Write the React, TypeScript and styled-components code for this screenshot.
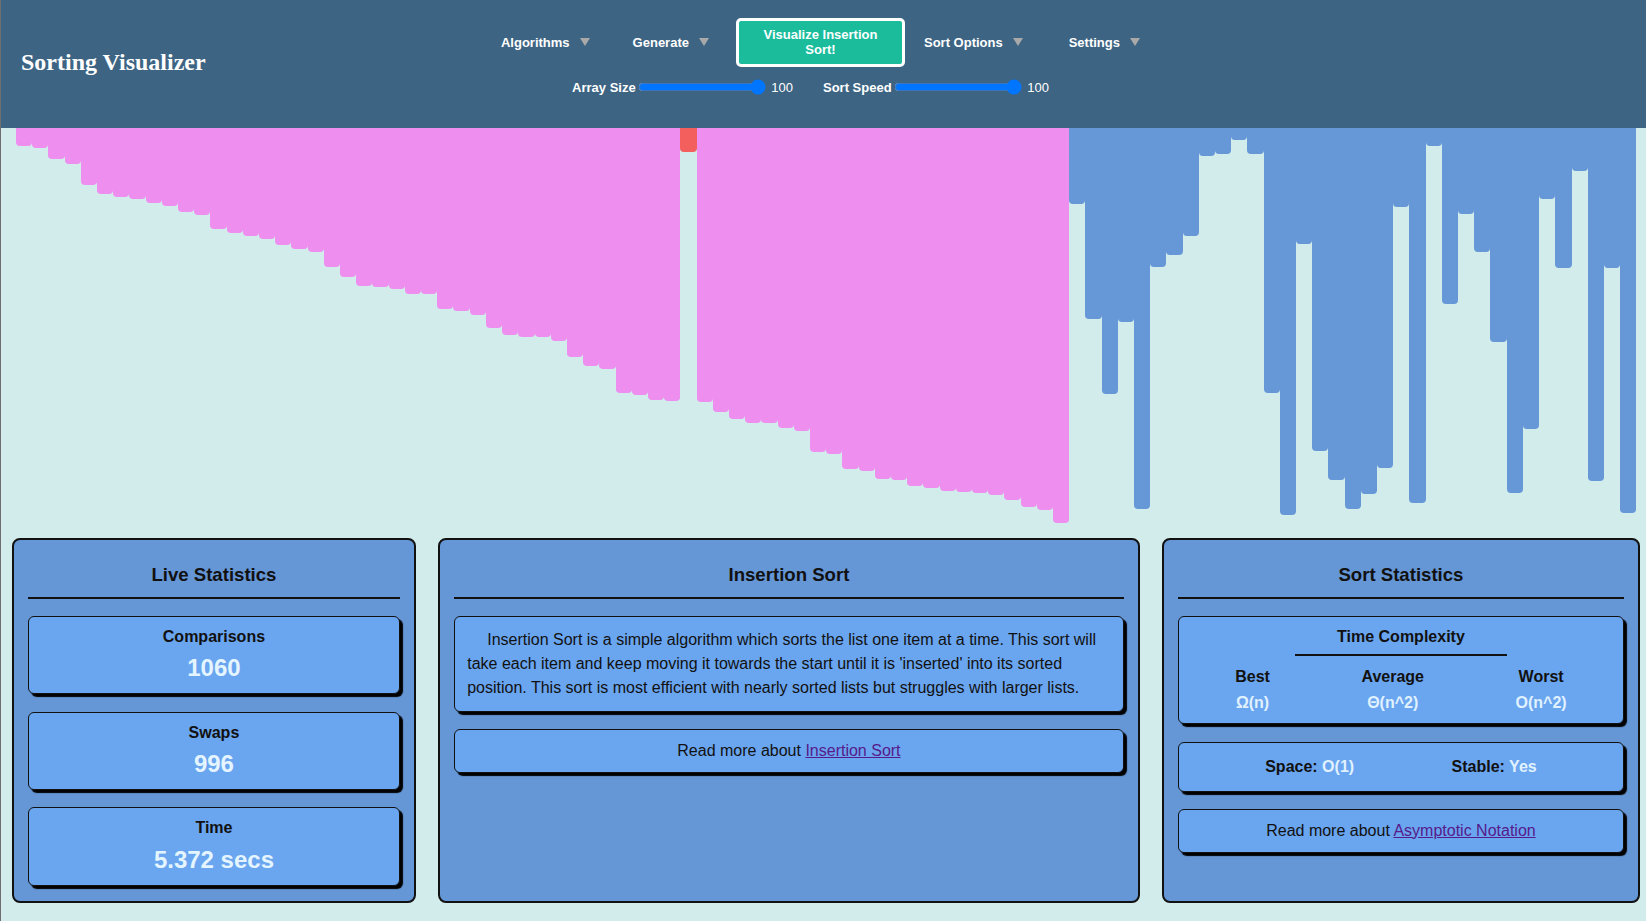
import React from 'react';
import styled, { createGlobalStyle } from 'styled-components';

const GlobalStyle = createGlobalStyle`
  html, body { margin: 0; padding: 0; }
  body {
    background: #d2eceb;
    font-family: "Liberation Sans", Arial, sans-serif;
  }
  * { box-sizing: border-box; }
`;

const Page = styled.div`
  min-height: 921px;
  border-left: 1px solid #6f6f6f;
  background: #d2eceb;
`;

const Header = styled.header`
  height: 128px;
  background: #3d6483;
  display: grid;
  grid-template-columns: 1fr auto 1fr;
  align-items: start;
`;

const Title = styled.h1`
  margin: 0;
  padding: 47px 0 0 20px;
  font: bold 24px/30px "Liberation Serif", "Times New Roman", serif;
  color: #ffffff;
  white-space: nowrap;
`;

const Controls = styled.div`
  display: flex;
  flex-direction: column;
  align-items: center;
  padding-top: 17.5px;
`;

const NavRow = styled.nav`
  display: flex;
  align-items: center;
  height: 49px;
  padding-right: 6px;
`;

const Dropdown = styled.div<{ $gap: number }>`
  display: flex;
  align-items: center;
  gap: 10px;
  margin-left: ${(p) => p.$gap}px;
  color: #ffffff;
  font-weight: bold;
  font-size: 13px;
  white-space: nowrap;
  cursor: pointer;
`;

const Caret = styled.span`
  width: 0;
  height: 0;
  border-left: 5px solid transparent;
  border-right: 5px solid transparent;
  border-top: 8px solid #a9a9a9;
`;

const VisualizeButton = styled.button`
  margin-left: 27px;
  width: 169px;
  height: 49px;
  border: 3px solid #ffffff;
  border-radius: 5px;
  background: #1abc9c;
  color: #ffffff;
  font: bold 13px/15px "Liberation Sans", Arial, sans-serif;
  padding: 0 18px;
  cursor: pointer;
`;

const SliderRow = styled.div`
  display: flex;
  align-items: center;
  margin-top: 10.5px;
  padding-right: 26px;
  color: #ffffff;
  font-size: 13px;
`;

const SliderLabel = styled.label<{ $gap: number }>`
  font-weight: bold;
  margin-left: ${(p) => p.$gap}px;
  white-space: nowrap;
`;

const Range = styled.input`
  margin: 2px;
  width: 128px;
`;

const SliderValue = styled.span`
  margin-left: 3.6px;
`;

const BarArea = styled.div`
  height: 400px;
  padding-left: 15px;
  display: flex;
  align-items: flex-start;
`;

const BarTrack = styled.div`
  width: 1620px;
  display: flex;
  align-items: flex-start;
`;

const barColors = {
  sorted: '#ee8eee',
  active: '#f25f5c',
  unsorted: '#6697d7',
};

const Bar = styled.div<{ $state: 'sorted' | 'active' | 'unsorted' }>`
  flex: 1 1 0;
  border-radius: 0 0 4px 4px;
  background: ${(p) => barColors[p.$state]};
`;

const Panels = styled.section`
  display: grid;
  grid-template-columns: 404.5px 702.5px 478.5px;
  column-gap: 21.5px;
  padding: 10.3px 0 0 10.7px;
`;

const Panel = styled.div`
  height: 364.7px;
  border: 2px solid #111111;
  border-radius: 8px;
  background: #6596d6;
  padding: 24.7px 14.5px 0;
  display: flex;
  flex-direction: column;
`;

const PanelTitle = styled.h2`
  margin: 0;
  font-size: 18.6px;
  line-height: 20px;
  font-weight: bold;
  text-align: center;
  color: #111111;
`;

const Rule = styled.div`
  height: 2px;
  background: #111111;
  margin: 11.7px 0 17px;
`;

const Card = styled.div`
  border: 1px solid #111111;
  border-radius: 6px;
  background: #6aa5ef;
  box-shadow: 3px 3px 1px #000000;
  color: #111111;
  & + & {
    margin-top: 17.5px;
  }
`;

const StatCard = styled(Card)`
  padding: 11px 12px 11px;
  text-align: center;
`;

const StatLabel = styled.div`
  font-size: 16px;
  font-weight: bold;
  line-height: 18.4px;
`;

const StatValue = styled.div`
  margin-top: 8.4px;
  font-size: 24px;
  font-weight: bold;
  line-height: 27.6px;
  color: #e4f5ff;
`;

const DescriptionCard = styled(Card)`
  padding: 11px 12px;
  font-size: 16px;
  line-height: 24px;
  text-indent: 20px;
`;

const LinkCard = styled(Card)`
  padding: 11.5px 12px;
  font-size: 16px;
  line-height: 18.4px;
  text-align: center;
`;

const Link = styled.a`
  color: #551a8b;
  text-decoration: underline;
`;

const ComplexityCard = styled(Card)`
  padding: 11px 56px 11.4px;
  text-align: center;
  font-size: 16px;
  font-weight: bold;
  line-height: 18.4px;
`;

const SubRule = styled.div`
  width: 212px;
  height: 2px;
  background: #111111;
  margin: 8px auto 11.8px;
`;

const ComplexityRow = styled.div`
  display: flex;
  justify-content: space-between;
`;

const Column = styled.div`
  display: flex;
  flex-direction: column;
  align-items: center;
  gap: 7.3px;
`;

const LightValue = styled.span`
  color: #e0f2ff;
`;

const PropertyCard = styled(Card)`
  padding: 14.8px 86px;
  display: flex;
  justify-content: space-between;
  font-size: 16px;
  font-weight: bold;
  line-height: 18.4px;
`;

const values = [
  18, 20, 31, 36, 57, 66, 69, 71, 75, 78, 84, 87, 101, 105, 108, 111, 117, 121, 124, 139,
  149, 158, 159, 161, 166, 166, 181, 183, 187, 200, 207, 209, 209, 212.5, 228.5, 238, 241, 265, 267, 272,
  273, 24, 274, 284, 291, 295, 295, 300, 303, 324, 326, 341, 343, 351, 352, 358, 360, 363, 364, 365,
  367, 372, 379, 382, 395, 76, 191, 266, 194, 381, 139, 127, 108, 28, 26, 12, 26, 265, 387, 116,
  323, 352, 381, 366, 340, 79, 375, 18, 176, 86, 124, 214, 365, 301, 71, 140, 43, 353, 140, 385,
];

const SORTED_UNTIL = 65;
const ACTIVE = 41;

const stateOf = (i: number): 'sorted' | 'active' | 'unsorted' =>
  i === ACTIVE ? 'active' : i < SORTED_UNTIL ? 'sorted' : 'unsorted';

export default function App() {
  return (
    <>
      <GlobalStyle />
      <Page>
        <Header>
          <Title>Sorting Visualizer</Title>
          <Controls>
            <NavRow>
              <Dropdown $gap={0}>
                Algorithms <Caret />
              </Dropdown>
              <Dropdown $gap={43}>
                Generate <Caret />
              </Dropdown>
              <VisualizeButton>Visualize Insertion Sort!</VisualizeButton>
              <Dropdown $gap={19}>
                Sort Options <Caret />
              </Dropdown>
              <Dropdown $gap={46}>
                Settings <Caret />
              </Dropdown>
            </NavRow>
            <SliderRow>
              <SliderLabel $gap={0}>Array Size</SliderLabel>
              <Range type="range" min={5} max={100} defaultValue={100} />
              <SliderValue>100</SliderValue>
              <SliderLabel $gap={30}>Sort Speed</SliderLabel>
              <Range type="range" min={1} max={100} defaultValue={100} />
              <SliderValue>100</SliderValue>
            </SliderRow>
          </Controls>
          <div />
        </Header>

        <BarArea>
          <BarTrack>
            {values.map((v, i) => (
              <Bar key={i} $state={stateOf(i)} style={{ height: `${v}px` }} />
            ))}
          </BarTrack>
        </BarArea>

        <Panels>
          <Panel>
            <PanelTitle>Live Statistics</PanelTitle>
            <Rule />
            <StatCard>
              <StatLabel>Comparisons</StatLabel>
              <StatValue>1060</StatValue>
            </StatCard>
            <StatCard>
              <StatLabel>Swaps</StatLabel>
              <StatValue>996</StatValue>
            </StatCard>
            <StatCard>
              <StatLabel>Time</StatLabel>
              <StatValue>5.372 secs</StatValue>
            </StatCard>
          </Panel>

          <Panel>
            <PanelTitle>Insertion Sort</PanelTitle>
            <Rule />
            <DescriptionCard>
              Insertion Sort is a simple algorithm which sorts the list one item at a time. This sort will
              take each item and keep moving it towards the start until it is 'inserted' into its sorted
              position. This sort is most efficient with nearly sorted lists but struggles with larger lists.
            </DescriptionCard>
            <LinkCard>
              Read more about <Link href="#insertion-sort">Insertion Sort</Link>
            </LinkCard>
          </Panel>

          <Panel>
            <PanelTitle>Sort Statistics</PanelTitle>
            <Rule />
            <ComplexityCard>
              <div>Time Complexity</div>
              <SubRule />
              <ComplexityRow>
                <Column>
                  <span>Best</span>
                  <LightValue>Ω(n)</LightValue>
                </Column>
                <Column>
                  <span>Average</span>
                  <LightValue>Θ(n^2)</LightValue>
                </Column>
                <Column>
                  <span>Worst</span>
                  <LightValue>O(n^2)</LightValue>
                </Column>
              </ComplexityRow>
            </ComplexityCard>
            <PropertyCard>
              <span>
                Space: <LightValue>O(1)</LightValue>
              </span>
              <span>
                Stable: <LightValue>Yes</LightValue>
              </span>
            </PropertyCard>
            <LinkCard>
              Read more about <Link href="#asymptotic-notation">Asymptotic Notation</Link>
            </LinkCard>
          </Panel>
        </Panels>
      </Page>
    </>
  );
}
